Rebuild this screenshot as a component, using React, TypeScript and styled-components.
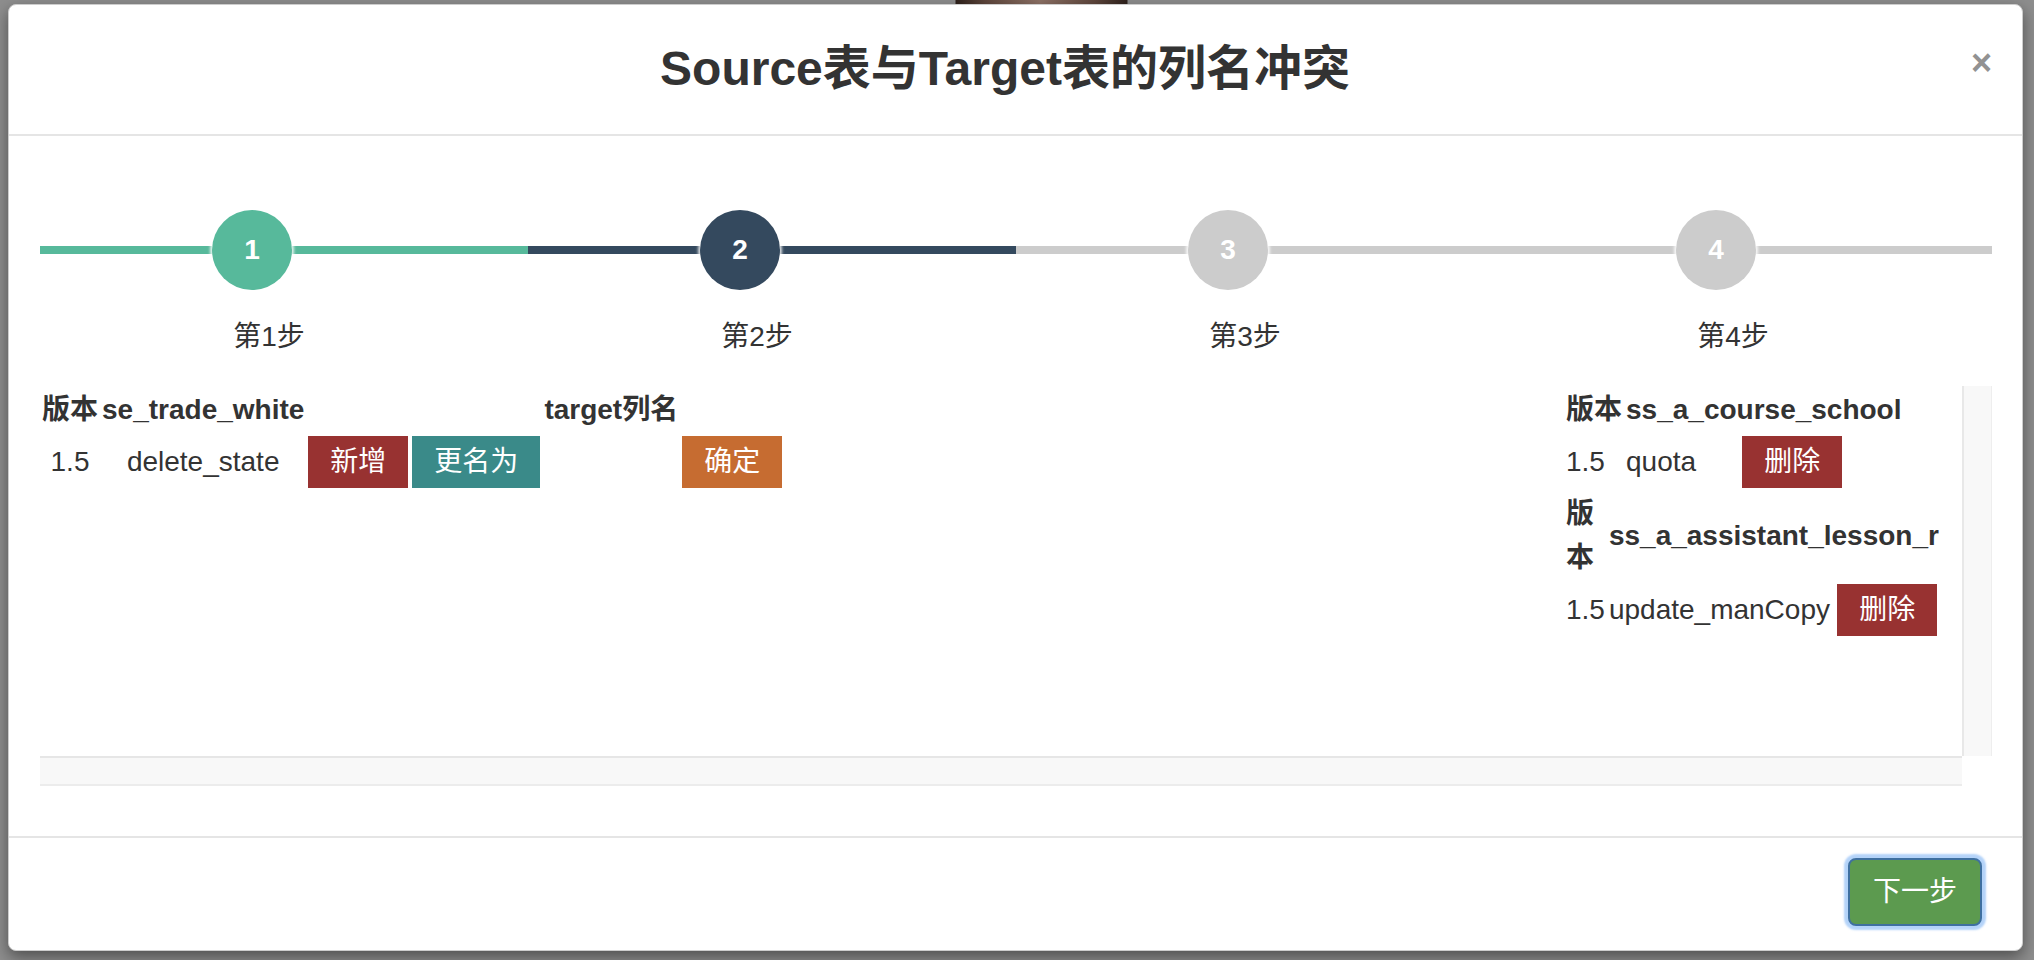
import React from 'react';
import styled, { createGlobalStyle } from 'styled-components';

const GlobalStyle = createGlobalStyle`
  html, body { margin: 0; padding: 0; }
  body {
    width: 2034px;
    height: 960px;
    overflow: hidden;
    background-color: #8e8e8e;
    background-image:
      linear-gradient(to right,
        transparent 955px, #2f221c 956px, #5e463c 985px, #8e7266 1040px,
        #5e463c 1095px, #2f221c 1127px, transparent 1128px);
    background-size: 100% 6px;
    background-repeat: no-repeat;
    font-family: "Liberation Sans", "Noto Sans CJK SC", sans-serif;
    color: #333;
  }
  * { box-sizing: border-box; }
`;

const Page = styled.div`
  padding: 4px 0 0 8px;
`;

const Modal = styled.div`
  width: 2015px;
  height: 947px;
  background: #fff;
  border: 1px solid #cdcdcd;
  border-radius: 8px;
  box-shadow: 0 6px 16px rgba(0, 0, 0, 0.45);
  display: flex;
  flex-direction: column;
  overflow: hidden;
`;

const Header = styled.div`
  height: 131px;
  flex: none;
  border-bottom: 2px solid #e5e5e5;
  padding: 0 30px;
  display: flex;
  align-items: center;
`;

const Title = styled.h4`
  flex: 1;
  margin: 0;
  text-align: center;
  font-size: 48px;
  line-height: 1.1;
  font-weight: 700;
  color: #333;
`;

const Close = styled.button`
  background: none;
  border: none;
  padding: 0;
  margin: 0 0 14px 0;
  font-family: "Liberation Sans", sans-serif;
  font-size: 36px;
  font-weight: 700;
  line-height: 1;
  color: #929292;
  cursor: pointer;
`;

const Body = styled.div`
  height: 700px;
  flex: none;
  padding: 74px 30px 50px 31px;
  display: flex;
  flex-direction: column;
`;

const Steps = styled.div`
  display: flex;
`;

const Step = styled.div`
  flex: 1;
  display: flex;
  flex-direction: column;
`;

const Track = styled.div`
  display: grid;
  grid-template-columns: 172px 80px 1fr;
  align-items: center;
  height: 80px;
`;

const Bar = styled.div<{ $color: string }>`
  height: 8px;
  background: ${(p) => p.$color};
`;

const Dot = styled.div<{ $color: string }>`
  width: 80px;
  height: 80px;
  border-radius: 50%;
  background: ${(p) => p.$color};
  color: #fff;
  font-size: 28px;
  font-weight: 700;
  display: flex;
  align-items: center;
  justify-content: center;
  position: relative;
  z-index: 1;
  box-shadow: 0 0 3px 2px rgba(255, 255, 255, 0.85);
`;

const StepLabel = styled.div`
  margin-top: 27px;
  padding-right: 30px;
  font-size: 28px;
  line-height: 40px;
  text-align: center;
  color: #333;
`;

const ScrollFrame = styled.div`
  margin-top: 29px;
  display: grid;
  grid-template-columns: 1fr 30px;
  grid-template-rows: 370px 30px;
`;

const ScrollContent = styled.div`
  overflow: hidden;
  display: flex;
  justify-content: space-between;
  align-items: flex-start;
  padding-right: 22px;
`;

const VTrack = styled.div`
  background: #f8f8f8;
  border-left: 2px solid #e8e8e8;
  border-right: 1px solid #eeeeee;
`;

const HTrack = styled.div`
  background: #f8f8f8;
  border-top: 2px solid #e6e6e6;
  border-bottom: 2px solid #ececec;
`;

const Corner = styled.div`
  background: #fff;
`;

const SidePanel = styled.div`
  width: 376px;
  display: flex;
  flex-direction: column;
  align-items: flex-start;
`;

const DataTable = styled.table<{ $align: 'center' | 'left' }>`
  border-collapse: collapse;
  border-spacing: 0;
  font-size: 28px;
  line-height: 44px;
  text-align: ${(p) => p.$align};
  color: #333;
`;

const Th = styled.th`
  padding: 2px;
  font-weight: 700;
  text-align: inherit;
  vertical-align: middle;
`;

const Td = styled.td`
  padding: 2px;
  vertical-align: middle;
  white-space: nowrap;
`;

const ButtonGroup = styled.div`
  display: inline-flex;
  gap: 4px;
  vertical-align: middle;
`;

const tones = {
  danger: '#983231',
  teal: '#3a8a89',
  orange: '#c66c31',
};

const ActionButton = styled.button<{ $tone: keyof typeof tones }>`
  display: inline-block;
  height: 52px;
  padding: 0 22px;
  border: none;
  border-radius: 0;
  font-family: inherit;
  font-size: 28px;
  line-height: 52px;
  color: #fff;
  background: ${(p) => tones[p.$tone]};
  vertical-align: middle;
  cursor: pointer;
`;

const Footer = styled.div`
  flex: 1;
  border-top: 2px solid #e5e5e5;
  padding: 20px 40px 0;
  display: flex;
  justify-content: flex-end;
  align-items: flex-start;
`;

const NextButton = styled.button`
  height: 68px;
  padding: 0 23px;
  border: 2px solid #3f70a0;
  border-radius: 8px;
  background: #5c9a4f;
  color: #fff;
  font-family: inherit;
  font-size: 28px;
  line-height: 64px;
  box-shadow: 0 0 2px 4px rgba(130, 182, 245, 0.6);
  cursor: pointer;
`;

const steps = [
  { n: 1, color: '#57b99b' },
  { n: 2, color: '#34495e' },
  { n: 3, color: '#cccccc' },
  { n: 4, color: '#cccccc' },
];

export default function App() {
  return (
    <>
      <GlobalStyle />
      <Page>
        <Modal>
          <Header>
            <Title>Source表与Target表的列名冲突</Title>
            <Close>×</Close>
          </Header>
          <Body>
            <Steps>
              {steps.map((s) => (
                <Step key={s.n}>
                  <Track>
                    <Bar $color={s.color} />
                    <Dot $color={s.color}>{s.n}</Dot>
                    <Bar $color={s.color} />
                  </Track>
                  <StepLabel>第{s.n}步</StepLabel>
                </Step>
              ))}
            </Steps>
            <ScrollFrame>
              <ScrollContent>
                <DataTable $align="center">
                  <thead>
                    <tr>
                      <Th>版本</Th>
                      <Th>se_trade_white</Th>
                      <Th></Th>
                      <Th>target列名</Th>
                      <Th></Th>
                    </tr>
                  </thead>
                  <tbody>
                    <tr>
                      <Td>1.5</Td>
                      <Td>delete_state</Td>
                      <Td>
                        <ButtonGroup>
                          <ActionButton $tone="danger">新增</ActionButton>
                          <ActionButton $tone="teal">更名为</ActionButton>
                        </ButtonGroup>
                      </Td>
                      <Td></Td>
                      <Td>
                        <ActionButton $tone="orange">确定</ActionButton>
                      </Td>
                    </tr>
                  </tbody>
                </DataTable>
                <SidePanel>
                  <DataTable $align="left">
                    <thead>
                      <tr>
                        <Th>版本</Th>
                        <Th colSpan={2}>ss_a_course_school</Th>
                      </tr>
                    </thead>
                    <tbody>
                      <tr>
                        <Td>1.5</Td>
                        <Td>quota</Td>
                        <Td>
                          <ActionButton $tone="danger">删除</ActionButton>
                        </Td>
                      </tr>
                    </tbody>
                  </DataTable>
                  <DataTable $align="left">
                    <thead>
                      <tr>
                        <Th>版本</Th>
                        <Th colSpan={2}>ss_a_assistant_lesson_r</Th>
                      </tr>
                    </thead>
                    <tbody>
                      <tr>
                        <Td>1.5</Td>
                        <Td>update_manCopy</Td>
                        <Td>
                          <ActionButton $tone="danger">删除</ActionButton>
                        </Td>
                      </tr>
                    </tbody>
                  </DataTable>
                </SidePanel>
              </ScrollContent>
              <VTrack />
              <HTrack />
              <Corner />
            </ScrollFrame>
          </Body>
          <Footer>
            <NextButton>下一步</NextButton>
          </Footer>
        </Modal>
      </Page>
    </>
  );
}
